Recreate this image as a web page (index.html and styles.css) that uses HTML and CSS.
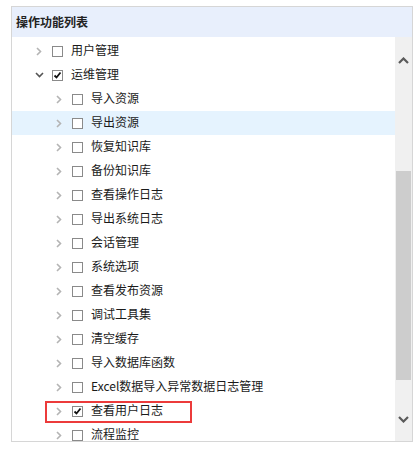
FILE: index.html
```html
<!DOCTYPE html>
<html lang="zh-CN">
<head>
<meta charset="utf-8">
<title>操作功能列表</title>
<link rel="stylesheet" href="styles.css">
</head>
<body>
<div class="panel">
  <div class="panel-head">操作功能列表</div>
  <div class="panel-body">
    <ul class="tree">
      <li class="row lv1"><span class="arrow"><svg width="6" height="9" viewBox="0 0 6 9"><path d="M1 1l3.5 3.5L1 8" fill="none" stroke="#b4b4b4" stroke-width="1.6"/></svg></span><span class="cb"></span><span class="label">用户管理</span></li>
      <li class="row lv1"><span class="arrow"><svg width="9" height="6" viewBox="0 0 9 6"><path d="M1 1l3.5 3.5L8 1" fill="none" stroke="#555" stroke-width="1.6"/></svg></span><span class="cb on"><svg width="9" height="9" viewBox="0 0 9 9"><path d="M1.5 4.5l2 2 4-5" fill="none" stroke="#111" stroke-width="1.8"/></svg></span><span class="label">运维管理</span></li>
      <li class="row lv2"><span class="arrow"><svg width="6" height="9" viewBox="0 0 6 9"><path d="M1 1l3.5 3.5L1 8" fill="none" stroke="#b4b4b4" stroke-width="1.6"/></svg></span><span class="cb"></span><span class="label">导入资源</span></li>
      <li class="row lv2 hover"><span class="arrow"><svg width="6" height="9" viewBox="0 0 6 9"><path d="M1 1l3.5 3.5L1 8" fill="none" stroke="#b4b4b4" stroke-width="1.6"/></svg></span><span class="cb"></span><span class="label">导出资源</span></li>
      <li class="row lv2"><span class="arrow"><svg width="6" height="9" viewBox="0 0 6 9"><path d="M1 1l3.5 3.5L1 8" fill="none" stroke="#b4b4b4" stroke-width="1.6"/></svg></span><span class="cb"></span><span class="label">恢复知识库</span></li>
      <li class="row lv2"><span class="arrow"><svg width="6" height="9" viewBox="0 0 6 9"><path d="M1 1l3.5 3.5L1 8" fill="none" stroke="#b4b4b4" stroke-width="1.6"/></svg></span><span class="cb"></span><span class="label">备份知识库</span></li>
      <li class="row lv2"><span class="arrow"><svg width="6" height="9" viewBox="0 0 6 9"><path d="M1 1l3.5 3.5L1 8" fill="none" stroke="#b4b4b4" stroke-width="1.6"/></svg></span><span class="cb"></span><span class="label">查看操作日志</span></li>
      <li class="row lv2"><span class="arrow"><svg width="6" height="9" viewBox="0 0 6 9"><path d="M1 1l3.5 3.5L1 8" fill="none" stroke="#b4b4b4" stroke-width="1.6"/></svg></span><span class="cb"></span><span class="label">导出系统日志</span></li>
      <li class="row lv2"><span class="arrow"><svg width="6" height="9" viewBox="0 0 6 9"><path d="M1 1l3.5 3.5L1 8" fill="none" stroke="#b4b4b4" stroke-width="1.6"/></svg></span><span class="cb"></span><span class="label">会话管理</span></li>
      <li class="row lv2"><span class="arrow"><svg width="6" height="9" viewBox="0 0 6 9"><path d="M1 1l3.5 3.5L1 8" fill="none" stroke="#b4b4b4" stroke-width="1.6"/></svg></span><span class="cb"></span><span class="label">系统选项</span></li>
      <li class="row lv2"><span class="arrow"><svg width="6" height="9" viewBox="0 0 6 9"><path d="M1 1l3.5 3.5L1 8" fill="none" stroke="#b4b4b4" stroke-width="1.6"/></svg></span><span class="cb"></span><span class="label">查看发布资源</span></li>
      <li class="row lv2"><span class="arrow"><svg width="6" height="9" viewBox="0 0 6 9"><path d="M1 1l3.5 3.5L1 8" fill="none" stroke="#b4b4b4" stroke-width="1.6"/></svg></span><span class="cb"></span><span class="label">调试工具集</span></li>
      <li class="row lv2"><span class="arrow"><svg width="6" height="9" viewBox="0 0 6 9"><path d="M1 1l3.5 3.5L1 8" fill="none" stroke="#b4b4b4" stroke-width="1.6"/></svg></span><span class="cb"></span><span class="label">清空缓存</span></li>
      <li class="row lv2"><span class="arrow"><svg width="6" height="9" viewBox="0 0 6 9"><path d="M1 1l3.5 3.5L1 8" fill="none" stroke="#b4b4b4" stroke-width="1.6"/></svg></span><span class="cb"></span><span class="label">导入数据库函数</span></li>
      <li class="row lv2"><span class="arrow"><svg width="6" height="9" viewBox="0 0 6 9"><path d="M1 1l3.5 3.5L1 8" fill="none" stroke="#b4b4b4" stroke-width="1.6"/></svg></span><span class="cb"></span><span class="label">Excel数据导入异常数据日志管理</span></li>
      <li class="row lv2 marked"><span class="arrow"><svg width="6" height="9" viewBox="0 0 6 9"><path d="M1 1l3.5 3.5L1 8" fill="none" stroke="#b4b4b4" stroke-width="1.6"/></svg></span><span class="cb on"><svg width="9" height="9" viewBox="0 0 9 9"><path d="M1.5 4.5l2 2 4-5" fill="none" stroke="#111" stroke-width="1.8"/></svg></span><span class="label">查看用户日志</span></li>
      <li class="row lv2"><span class="arrow"><svg width="6" height="9" viewBox="0 0 6 9"><path d="M1 1l3.5 3.5L1 8" fill="none" stroke="#b4b4b4" stroke-width="1.6"/></svg></span><span class="cb"></span><span class="label">流程监控</span></li>
    </ul>
    <div class="scrollbar">
      <span class="sb-btn up"><svg width="11" height="7" viewBox="0 0 11 7"><path d="M1 6l4.5-4.5L10 6" fill="none" stroke="#5a5a5a" stroke-width="2.2"/></svg></span>
      <span class="sb-thumb"></span>
      <span class="sb-btn down"><svg width="11" height="7" viewBox="0 0 11 7"><path d="M1 1l4.5 4.5L10 1" fill="none" stroke="#5a5a5a" stroke-width="2.2"/></svg></span>
    </div>
  </div>
</div>
</body>
</html>
```

FILE: styles.css
```css
html * {margin:0; padding:0;}
body {background:#fff; color:#1a1a1a; font:12px/1 "Noto Sans CJK SC","Microsoft YaHei",sans-serif; padding:6px 0 0 11px;}
ul {list-style:none;}

.panel {width:400px; height:434px; border:1px solid #d6d6d6; display:flex; flex-direction:column;}
.panel-head {height:30px; flex:none; display:flex; align-items:center; padding-left:4px; background:#e8effc; font-weight:bold; color:#222;}
.panel-body {flex:1; display:flex; overflow:hidden;}

.tree {flex:1; padding-top:2px; overflow:hidden;}
.row {position:relative; height:24px; display:flex; align-items:center;}
.row.lv1 {padding-left:22px;}
.row.lv2 {padding-left:42px;}
.row.hover {background:#e5f3fe;}
.row.marked::after {content:""; position:absolute; left:33px; top:2px; width:143px; height:18px; border:2px solid #ec3b3b;}

.arrow {width:10px; height:10px; display:flex; align-items:center; justify-content:center; margin-right:8px;}
.cb {width:11px; height:11px; box-sizing:border-box; border:1px solid #8a8a8a; background:#fff; display:flex; align-items:center; justify-content:center; margin-right:8px;}
.label {white-space:nowrap; position:relative; top:-1px;}

.scrollbar {width:17px; flex:none; background:#f0f0f0; display:flex; flex-direction:column; align-items:center;}
.sb-btn {width:17px; height:17px; display:flex; align-items:center; justify-content:center;}
.sb-btn.up {margin-top:15px;}
.sb-thumb {width:15px; height:209px; margin-top:102px; background:#cdcdcd;}
.sb-btn.down {margin-top:31px;}
```
